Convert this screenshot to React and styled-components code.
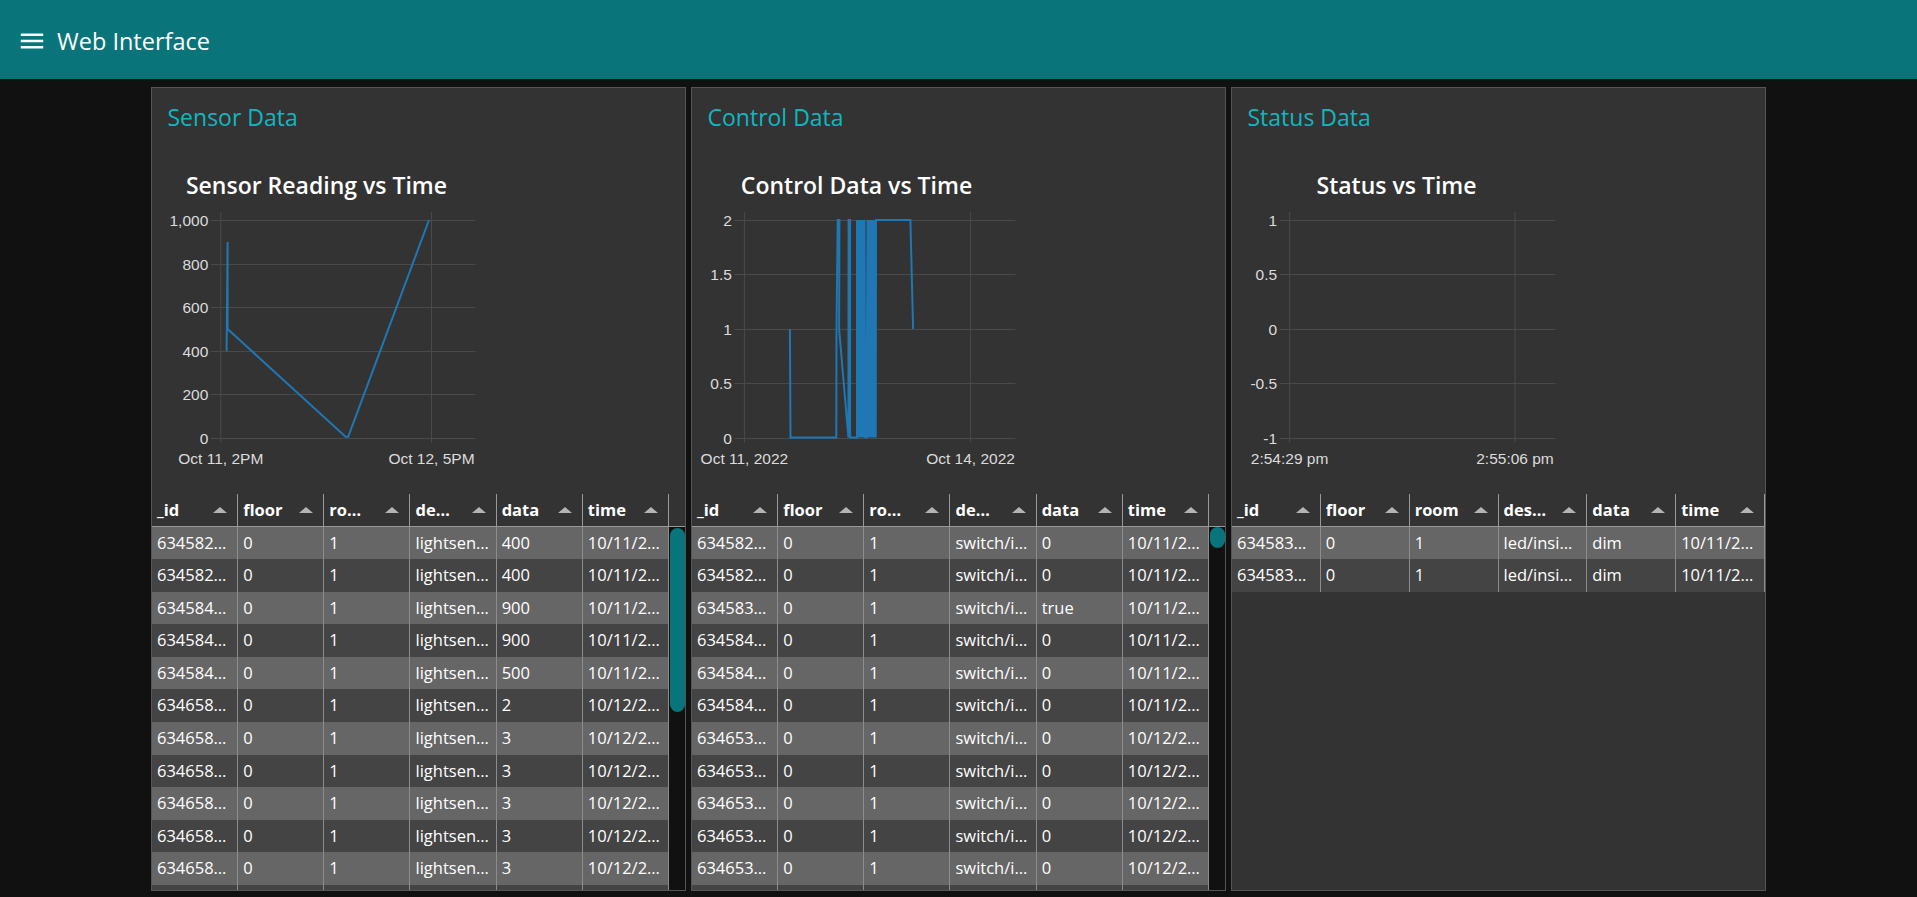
import React from 'react';
import styled, { createGlobalStyle } from 'styled-components';

const GlobalStyle = createGlobalStyle`
  html, body {
    margin: 0;
    padding: 0;
    background: #111111;
  }
  body {
    font-family: 'Open Sans', 'Noto Sans', sans-serif;
    color: #eeeeee;
    overflow: hidden;
  }
`;

const Toolbar = styled.header`
  height: 79px;
  box-sizing: border-box;
  padding: 2px 0 0 17px;
  background: #097479;
  display: flex;
  align-items: center;
  gap: 10px;
`;

const ToolbarTitle = styled.h1`
  margin: 0;
  font-size: 23.5px;
  font-weight: 400;
  line-height: 32px;
  color: #ffffff;
`;

const Board = styled.main`
  display: flex;
  justify-content: center;
  gap: 5px;
  padding-top: 8px;
`;

const Group = styled.section`
  width: 535px;
  height: 804px;
  box-sizing: border-box;
  border: 1px solid #555555;
  background: #333333;
  display: flex;
  flex-direction: column;
  overflow: hidden;
`;

const GroupTitle = styled.h2`
  margin: 0;
  padding: 13px 15.5px 0;
  font-size: 23px;
  font-weight: 500;
  line-height: 32px;
  color: #0eb8c0;
`;

const ChartBox = styled.div`
  margin: 36px 0 0 6px;
  width: 320px;
`;

const ChartLabel = styled.div`
  width: 317px;
  text-align: center;
  font-size: 23px;
  font-weight: 600;
  line-height: 32px;
  color: #ffffff;
`;

const Plot = styled.svg`
  display: block;
  overflow: visible;
`;

const GridLine = styled.line`
  stroke: #4a4a4a;
  stroke-width: 1;
`;

const AxisText = styled.text`
  font-family: 'Liberation Sans', Arial, sans-serif;
  font-size: 15.5px;
  fill: #dcdcdc;
`;

const DataLine = styled.polyline`
  fill: none;
  stroke: #1f77b4;
  stroke-width: 2;
  stroke-linejoin: miter;
`;

const Table = styled.div`
  margin-top: 22.5px;
  flex: 1;
  min-height: 0;
  display: flex;
  flex-direction: column;
`;

const HeadRow = styled.div`
  display: flex;
  height: 32px;
  border-bottom: 1px solid #999999;
  background: #333333;
`;

const Columns = styled.div`
  flex: 1;
  display: grid;
  grid-template-columns: repeat(6, 1fr);
`;

const HeadCell = styled.div`
  display: flex;
  align-items: center;
  justify-content: space-between;
  padding: 0 10px 0 5px;
  border-right: 1px solid #999999;
  font-size: 16.5px;
  font-weight: 700;
  color: #ffffff;
  white-space: nowrap;
  overflow: hidden;
`;

const SortArrow = styled.span`
  width: 0;
  height: 0;
  border-left: 7px solid transparent;
  border-right: 7px solid transparent;
  border-bottom: 6px solid #b4b4b4;
  flex-shrink: 0;
`;

const HeadGap = styled.div`
  width: 16px;
`;

const Body = styled.div`
  flex: 1;
  min-height: 0;
  display: flex;
`;

const Rows = styled.div`
  flex: 1;
  overflow: hidden;
`;

const Row = styled.div`
  display: grid;
  grid-template-columns: repeat(6, 1fr);
  height: 32.6px;
  background: ${({ $odd }) => ($odd ? '#666666' : '#444444')};
`;

const Cell = styled.div`
  padding: 0 5px;
  border-right: 1px solid #8c8c8c;
  font-size: 16.5px;
  line-height: 32.6px;
  color: #ffffff;
  white-space: nowrap;
  overflow: hidden;
`;

const Track = styled.div`
  width: 16px;
  background: #111111;
  padding: ${({ $offset }) => $offset}px 0 0 1px;
  box-sizing: border-box;
`;

const Thumb = styled.div`
  width: 15px;
  height: ${({ $size }) => $size}px;
  border-radius: 7.5px;
  background: #097479;
`;

const MenuIcon = () => (
  <svg width="30" height="30" viewBox="0 0 24 24">
    <path fill="#ffffff" d="M3 18h18v-2H3v2zm0-5h18v-2H3v2zm0-7v2h18V6H3z" />
  </svg>
);

const PLOT_TOP = 19;
const PLOT_BOTTOM = 236.5;
const PLOT_RIGHT = 317.4;

const Chart = ({ title, yTicks, xTicks, plotLeft, points }) => {
  const step = (PLOT_BOTTOM - PLOT_TOP) / (yTicks.length - 1);
  return (
    <ChartBox>
      <ChartLabel>{title}</ChartLabel>
      <Plot width="320" height="270" viewBox="0 0 320 270">
        {yTicks.map((t, i) => {
          const y = Math.round(PLOT_TOP + i * step) + 0.5;
          return (
            <g key={t}>
              <GridLine x1={plotLeft - 10} x2={PLOT_RIGHT} y1={y} y2={y} />
              <AxisText x={plotLeft - 12.5} y={y + 5.3} textAnchor="end">
                {t}
              </AxisText>
            </g>
          );
        })}
        {xTicks.map(([label, x]) => (
          <g key={label}>
            <GridLine x1={x} x2={x} y1={11} y2={PLOT_BOTTOM + 5} />
            <AxisText x={x} y={262.5} textAnchor="middle">
              {label}
            </AxisText>
          </g>
        ))}
        {points && <DataLine points={points.map((p) => p.join(',')).join(' ')} />}
      </Plot>
    </ChartBox>
  );
};

const DataTable = ({ heads, rows, thumb }) => (
  <Table>
    <HeadRow>
      <Columns>
        {heads.map((h) => (
          <HeadCell key={h}>
            {h}
            <SortArrow />
          </HeadCell>
        ))}
      </Columns>
      {thumb && <HeadGap />}
    </HeadRow>
    <Body>
      <Rows>
        {rows.map((r, i) => (
          <Row key={i} $odd={i % 2 === 0}>
            {r.map((c, j) => (
              <Cell key={j}>{c}</Cell>
            ))}
          </Row>
        ))}
      </Rows>
      {thumb && (
        <Track $offset={thumb.offset}>
          <Thumb $size={thumb.size} />
        </Track>
      )}
    </Body>
  </Table>
);

const repeat = (row, n) => Array.from({ length: n }, () => row);

// the last row only peeks in below the fold, its text is out of view
const hiddenRow = ['', '', '', '', '', ''];

const sensorRows = [
  ...repeat(['634582…', '0', '1', 'lightsen…', '400', '10/11/2…'], 2),
  ...repeat(['634584…', '0', '1', 'lightsen…', '900', '10/11/2…'], 2),
  ['634584…', '0', '1', 'lightsen…', '500', '10/11/2…'],
  ['634658…', '0', '1', 'lightsen…', '2', '10/12/2…'],
  ...repeat(['634658…', '0', '1', 'lightsen…', '3', '10/12/2…'], 5),
  hiddenRow,
];

const controlRows = [
  ...repeat(['634582…', '0', '1', 'switch/i…', '0', '10/11/2…'], 2),
  ['634583…', '0', '1', 'switch/i…', 'true', '10/11/2…'],
  ...repeat(['634584…', '0', '1', 'switch/i…', '0', '10/11/2…'], 3),
  ...repeat(['634653…', '0', '1', 'switch/i…', '0', '10/12/2…'], 5),
  hiddenRow,
];

const statusRows = repeat(['634583…', '0', '1', 'led/insi…', 'dim', '10/11/2…'], 2);

const sensorPoints = [
  [68.3, 149.5], [68.6, 149.5], [69.6, 41], [69.6, 41], [69.6, 128],
  [187.8, 236], [188.6, 235.8], [189.4, 235.8], [190.2, 235.8], [271, 19],
];

const zigzag = (from, to) => {
  const pts = [];
  for (let x = from; x <= to; x += 1.5) {
    pts.push([x, 19]);
    pts.push([x + 0.75, 236.5]);
  }
  return pts;
};

const controlPoints = [
  [91.9, 128], [92.5, 236.5], [138.3, 236.5], [138.5, 128], [139.7, 19], [141.4, 19],
  [141.1, 128], [150.4, 236.5], [150.6, 19], [152.1, 19], [152.1, 236.5], [159, 236.5],
  ...zigzag(159, 167),
  [168.5, 236.5],
  ...zigzag(169.5, 177),
  [178, 19], [212.4, 19], [215.1, 128],
];

const sortHeads = ['_id', 'floor', 'ro…', 'de…', 'data', 'time'];

const App = () => (
  <>
    <GlobalStyle />
    <Toolbar>
      <MenuIcon />
      <ToolbarTitle>Web Interface</ToolbarTitle>
    </Toolbar>
    <Board>
      <Group>
        <GroupTitle>Sensor Data</GroupTitle>
        <Chart
          title="Sensor Reading vs Time"
          yTicks={['1,000', '800', '600', '400', '200', '0']}
          xTicks={[['Oct 11, 2PM', 62.8], ['Oct 12, 5PM', 273.5]]}
          plotLeft={62.8}
          points={sensorPoints}
        />
        <DataTable heads={sortHeads} rows={sensorRows} thumb={{ offset: 1, size: 184.5 }} />
      </Group>
      <Group>
        <GroupTitle>Control Data</GroupTitle>
        <Chart
          title="Control Data vs Time"
          yTicks={['2', '1.5', '1', '0.5', '0']}
          xTicks={[['Oct 11, 2022', 46.4], ['Oct 14, 2022', 272.6]]}
          plotLeft={46.4}
          points={controlPoints}
        />
        <DataTable heads={sortHeads} rows={controlRows} thumb={{ offset: 0.5, size: 20.5 }} />
      </Group>
      <Group>
        <GroupTitle>Status Data</GroupTitle>
        <Chart
          title="Status vs Time"
          yTicks={['1', '0.5', '0', '-0.5', '-1']}
          xTicks={[['2:54:29 pm', 51.6], ['2:55:06 pm', 277]]}
          plotLeft={51.6}
        />
        <DataTable heads={['_id', 'floor', 'room', 'des…', 'data', 'time']} rows={statusRows} />
      </Group>
    </Board>
  </>
);

export default App;
